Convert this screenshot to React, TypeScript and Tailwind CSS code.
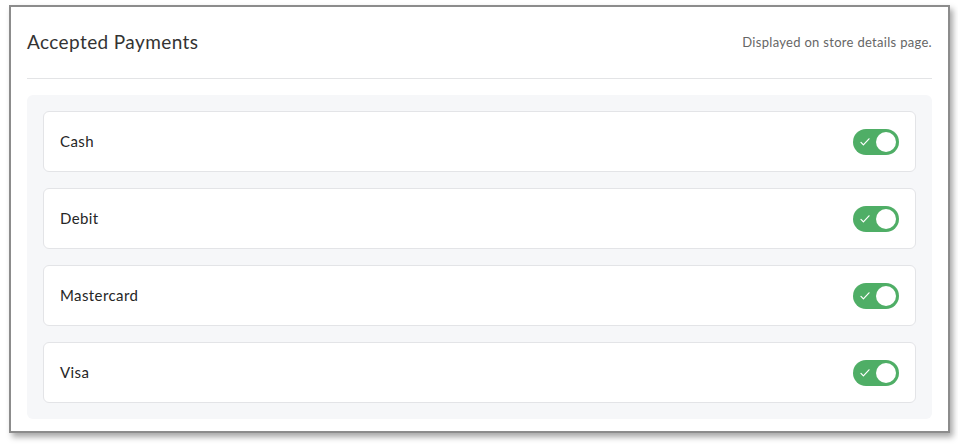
import React from "react";

function Toggle() {
  return (
    <div className="relative flex h-[26px] w-[46px] items-center rounded-full bg-[#4fae66]">
      <svg
        viewBox="0 0 12 10"
        className="absolute left-[7px] top-[9px] h-[8px] w-[10px]"
        fill="none"
        stroke="white"
        strokeWidth="1.5"
        strokeLinecap="round"
        strokeLinejoin="round"
      >
        <path d="M1 5.5 L4 8.5 L11 1" />
      </svg>
      <div className="absolute right-[3px] top-[3px] h-[20px] w-[20px] rounded-full bg-white" />
    </div>
  );
}

function App() {
  const payments = ["Cash", "Debit", "Mastercard", "Visa"];

  return (
    <div className="h-[446px] w-[958px] bg-white pl-[9px] pt-[5px]" style={{ fontFamily: "Lato, 'Noto Sans', sans-serif" }}>
      <div className="w-[941px] border-2 border-[#8c8c8c] bg-white px-4 pb-3 shadow-[3px_4px_6px_rgba(0,0,0,0.35)]">
        {/* Header */}
        <div className="flex h-[72px] items-center justify-between border-b border-[#e3e4e6]">
          <h2 className="text-[19px] tracking-[0.4px] text-[#333]">Accepted Payments</h2>
          <span className="text-[13px] tracking-[0.3px] text-[#666]">Displayed on store details page.</span>
        </div>

        {/* Payment list */}
        <div className="mt-4 flex flex-col gap-4 rounded-md bg-[#f6f7f9] p-4">
          {payments.map((name) => (
            <div
              key={name}
              className="flex h-[61px] items-center justify-between rounded-md border border-[#e3e4e7] bg-white pl-4 pr-[16px]"
            >
              <span className="text-[15px] tracking-[0.4px] text-[#262626]">{name}</span>
              <Toggle />
            </div>
          ))}
        </div>
      </div>
    </div>
  );
}

export default App;
